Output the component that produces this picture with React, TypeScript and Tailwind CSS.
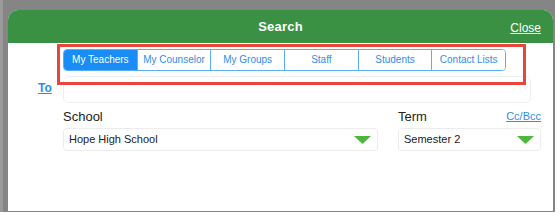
import { useState } from 'react';

const tabs = ['My Teachers', 'My Counselor', 'My Groups', 'Staff', 'Students', 'Contact Lists'];

function Caret() {
  return (
    <svg width="17" height="8" viewBox="0 0 17 8" className="shrink-0">
      <polygon points="0,0 17,0 8.5,8" fill="#4cb83a" />
    </svg>
  );
}

function Select({ value, className }: { value: string; className?: string }) {
  return (
    <div
      className={
        'h-[23px] rounded-[4px] border border-[#ececec] bg-white flex items-center justify-between pl-[5px] pr-[6px] ' +
        (className ?? '')
      }
    >
      <span className="text-[11px] text-[#222]">{value}</span>
      <Caret />
    </div>
  );
}

export default function App() {
  const [active, setActive] = useState(0);

  return (
    <div className="w-[560px] h-[216px] bg-white font-['Liberation_Sans',Arial,sans-serif] overflow-hidden">
      <div className="w-[555px] h-[212px] bg-[#858585] border-l-[3px] border-l-[#9a9a9a] pt-[10px] pl-[5px] pr-[2px] pb-[1px] flex flex-col">
        <div className="flex-1 flex flex-col bg-white rounded-t-[10px] overflow-hidden">
          {/* header */}
          <div className="h-[33px] bg-[#3a9143] relative flex items-center justify-center shrink-0">
            <span className="text-white text-[13px] font-semibold tracking-[0.2px]">Search</span>
            <span className="absolute right-[12px] top-[9px] text-white text-[12px] underline">Close</span>
          </div>

          <div className="relative pl-[55px] pr-[22px] pt-[6px]">
            {/* tabs */}
            <div className="flex h-[22px] w-[443px] rounded-[4px] border border-[#5aaef5] overflow-hidden">
              {tabs.map((t, i) => (
                <button
                  key={t}
                  onClick={() => setActive(i)}
                  className={
                    'flex-1 text-[10px] leading-none flex items-center justify-center ' +
                    (i > 0 ? 'border-l border-[#5aaef5] ' : '') +
                    (i === active ? 'bg-[#1a8cf6] text-white' : 'bg-white text-[#2f8ee8]')
                  }
                >
                  {t}
                </button>
              ))}
            </div>

            {/* to row */}
            <div className="flex items-center mt-[5px]">
              <span className="absolute left-[30px] top-[36px] text-[12px] font-bold text-[#2f8ee8] underline">To</span>
              <div className="h-[27px] w-full rounded-[5px] border border-[#eeeeee] bg-white" />
            </div>

            {/* red highlight */}
            <div className="absolute left-[49px] top-[1px] w-[469px] h-[41px] border-[3px] border-[#e8453c] pointer-events-none" />

            {/* school / term */}
            <div className="flex mt-[4px] gap-[20px]">
              <div className="w-[315px] flex flex-col">
                <span className="text-[13px] text-[#222] leading-[20px]">School</span>
                <Select value="Hope High School" className="mt-[1px]" />
              </div>
              <div className="flex-1 flex flex-col">
                <div className="flex items-center justify-between">
                  <span className="text-[13px] text-[#222] leading-[20px]">Term</span>
                  <span className="text-[11px] text-[#2f8ee8] underline -mt-[2px] -mr-[10px]">Cc/Bcc</span>
                </div>
                <Select value="Semester 2" className="mt-[1px] -mr-[10px]" />
              </div>
            </div>
          </div>
        </div>
      </div>
    </div>
  );
}
